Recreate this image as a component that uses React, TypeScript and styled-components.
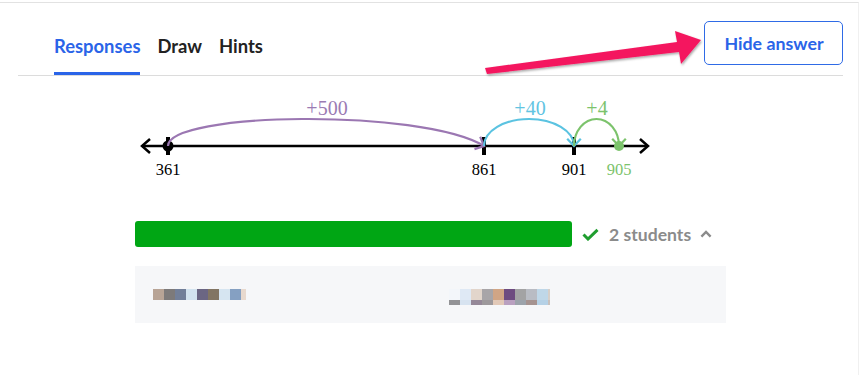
import React from 'react';
import styled, { createGlobalStyle } from 'styled-components';

const GlobalStyle = createGlobalStyle`
  html, body {
    margin: 0;
    padding: 0;
    background: #fff;
    font-family: Lato, "Noto Sans", sans-serif;
  }
`;

const Page = styled.div`
  position: relative;
  box-sizing: border-box;
  width: 859px;
  height: 373px;
  margin-top: 2px;
  border-top: 1px solid #e2e2e2;
  border-right: 1px solid #f0f0f0;
`;

const Header = styled.div`
  box-sizing: border-box;
  display: flex;
  align-items: flex-end;
  justify-content: space-between;
  width: 825px;
  height: 73px;
  margin-left: 18px;
  border-bottom: 1px solid #dcdcdc;
`;

const Tabs = styled.nav`
  display: flex;
  gap: 17px;
  padding-left: 36px;
`;

const Tab = styled.div<{ $active?: boolean }>`
  font-size: 18.4px;
  font-weight: 700;
  line-height: 22px;
  padding-bottom: 15px;
  color: ${({ $active }) => ($active ? '#2a64e8' : '#222')};
  border-bottom: 3px solid ${({ $active }) => ($active ? '#2a64e8' : 'transparent')};
`;

const HideButton = styled.button`
  box-sizing: border-box;
  width: 139px;
  height: 44px;
  margin-bottom: 10px;
  padding: 0 0 0 1px;
  background: #fff;
  border: 1px solid #2f6be6;
  border-radius: 5px;
  color: #2a64e8;
  font-family: Lato, sans-serif;
  font-size: 17.8px;
  font-weight: 700;
  cursor: pointer;
`;

const Content = styled.div`
  width: 591px;
  margin-left: 135px;
`;

const NumberLine = styled.svg`
  display: block;
  margin-top: 12px;
  font-family: "Liberation Serif", "Times New Roman", serif;
`;

const ResultRow = styled.div`
  display: flex;
  align-items: center;
  height: 26px;
  margin-top: 33px;
`;

const Bar = styled.div<{ $color: string }>`
  height: 26px;
  border-radius: 3px;
  background: ${({ $color }) => $color};
`;

const CheckIcon = styled.svg`
  margin-left: 10px;
  flex: none;
`;

const Count = styled.span`
  margin-left: 10px;
  font-size: 17.6px;
  font-weight: 700;
  color: #8b8b8b;
`;

const Chevron = styled.svg`
  margin-left: 9px;
  flex: none;
`;

const Panel = styled.div`
  display: grid;
  grid-template-columns: 1fr 1fr;
  height: 57px;
  margin-top: 19px;
  background: #f6f7f9;
`;

const Cell = styled.div`
  padding: 23px 0 0 18px;
`;

const Mosaic = styled.div`
  display: flex;
  flex-direction: column;
`;

const MosaicRow = styled.div<{ $h: number }>`
  display: flex;
  height: ${({ $h }) => $h}px;
`;

const Pixel = styled.span<{ $c: string; $w?: number }>`
  width: ${({ $w }) => $w ?? 11}px;
  background: ${({ $c }) => $c};
`;

const Pointer = styled.svg`
  position: absolute;
  left: 0;
  top: -3px;
  pointer-events: none;
`;

const nameA = ['#b8a496', '#7d7a7a', '#727f99', '#d3e3ef', '#6b6683', '#827563', '#d6e5f1', '#85a0c2'];
const nameBTop = ['#f3f6fa', '#dfe9f5', '#e2d5cb', '#a8a5a8', '#d1a585', '#6e4b80', '#a3a3a4', '#b9bcc4', '#bfd7e8'];
const nameBBottom = ['#939396', '#d7e3f0', '#958898', '#9d999c', '#e2c9b8', '#b9a0c0', '#9ca3ab', '#a59390', '#b5d1e6'];

// chevron arrowhead at (x, y) pointing along angle (radians)
const head = (x: number, y: number, angle: number, size = 10) => {
  const spread = Math.PI / 4.2;
  const a1 = angle + Math.PI - spread;
  const a2 = angle + Math.PI + spread;
  return `M${x + size * Math.cos(a1)},${y + size * Math.sin(a1)} L${x},${y} L${x + size * Math.cos(a2)},${y + size * Math.sin(a2)}`;
};

const ticks = [
  { x: 168, label: '361', color: '#000' },
  { x: 484, label: '861', color: '#000' },
  { x: 574, label: '901', color: '#000' },
  { x: 619, label: '905', color: '#7cc36c' },
];

const App = () => {
  return (
    <>
      <GlobalStyle />
      <Page>
        <Header>
          <Tabs>
            <Tab $active>Responses</Tab>
            <Tab>Draw</Tab>
            <Tab>Hints</Tab>
          </Tabs>
          <HideButton>Hide answer</HideButton>
        </Header>

        <Content>
          <NumberLine width={530} height={100} viewBox="135 88 530 100">
            {/* axis */}
            <line x1={142} y1={146} x2={647} y2={146} stroke="#000" strokeWidth={2.5} />
            <path d="M150,139 L142,146 L150,153" fill="none" stroke="#000" strokeWidth={2.5} />
            <path d="M640,139 L648,146 L640,153" fill="none" stroke="#000" strokeWidth={2.5} />

            {/* ticks */}
            {ticks.slice(0, 3).map((t) => (
              <rect key={t.x} x={t.x - 2} y={137} width={4} height={18} fill="#000" />
            ))}
            <circle cx={168} cy={146} r={5.5} fill="#000" />

            {/* jumps */}
            <path d="M168,146 C168,112 420,108 484,146" fill="none" stroke="#9b77b2" strokeWidth={2.2} />
            <path d={head(484, 146, Math.atan2(146 - 128, 484 - 445))} fill="none" stroke="#9b77b2" strokeWidth={2.2} />
            <path d="M484,146 A45,27 0 0 1 574,146" fill="none" stroke="#5bc3e1" strokeWidth={2.2} />
            <path d={head(574, 146, Math.PI / 2)} fill="none" stroke="#5bc3e1" strokeWidth={2.2} />
            <path d="M574,146 A22.5,27 0 0 1 619,146" fill="none" stroke="#7cc36c" strokeWidth={2.2} />
            <circle cx={619} cy={146} r={5} fill="#7cc36c" />
            <path d={head(619, 146, Math.PI / 2)} fill="none" stroke="#7cc36c" strokeWidth={2.2} />

            <text x={327} y={115} fontSize={20} fill="#9b7bb3" textAnchor="middle">+500</text>
            <text x={530} y={115} fontSize={20} fill="#62c4e2" textAnchor="middle">+40</text>
            <text x={597} y={115} fontSize={20} fill="#7cc36c" textAnchor="middle">+4</text>

            {ticks.map((t) => (
              <text key={t.label} x={t.x} y={175} fontSize={16.5} fill={t.color} textAnchor="middle">
                {t.label}
              </text>
            ))}
          </NumberLine>

          <ResultRow>
            <Bar $color="#00a614" style={{ width: 437 }} />
            <CheckIcon width={17} height={13} viewBox="0 0 17 13">
              <path d="M1.5,6.5 L6,11 L15.5,1.8" fill="none" stroke="#1f9e2f" strokeWidth={3} />
            </CheckIcon>
            <Count>2 students</Count>
            <Chevron width={12} height={8} viewBox="0 0 12 8">
              <path d="M1.4,6.6 L6,2 L10.6,6.6" fill="none" stroke="#8b8b8b" strokeWidth={2.4} />
            </Chevron>
          </ResultRow>

          <Panel>
            <Cell>
              <Mosaic>
                <MosaicRow $h={11}>
                  {nameA.map((c, i) => (
                    <Pixel key={i} $c={c} />
                  ))}
                  <Pixel $c="#e8d9ce" $w={5} />
                </MosaicRow>
              </Mosaic>
            </Cell>
            <Cell>
              <Mosaic>
                <MosaicRow $h={11}>
                  {nameBTop.map((c, i) => (
                    <Pixel key={i} $c={c} />
                  ))}
                  <Pixel $c="#d6cfc9" $w={2} />
                </MosaicRow>
                <MosaicRow $h={5}>
                  {nameBBottom.map((c, i) => (
                    <Pixel key={i} $c={c} />
                  ))}
                  <Pixel $c="#c8c0bc" $w={2} />
                </MosaicRow>
              </Mosaic>
            </Cell>
          </Panel>
        </Content>

        <Pointer width={861} height={100} viewBox="0 0 861 100">
          <defs>
            <filter id="shadow" x="-10%" y="-50%" width="120%" height="200%">
              <feDropShadow dx="1" dy="1.5" stdDeviation="1.2" floodColor="#000" floodOpacity="0.35" />
            </filter>
          </defs>
          <polygon
            points="485,68 677,42 675,31 701,40 681,64 679,52 487,74"
            fill="#f4175f"
            filter="url(#shadow)"
          />
        </Pointer>
      </Page>
    </>
  );
};

export default App;
